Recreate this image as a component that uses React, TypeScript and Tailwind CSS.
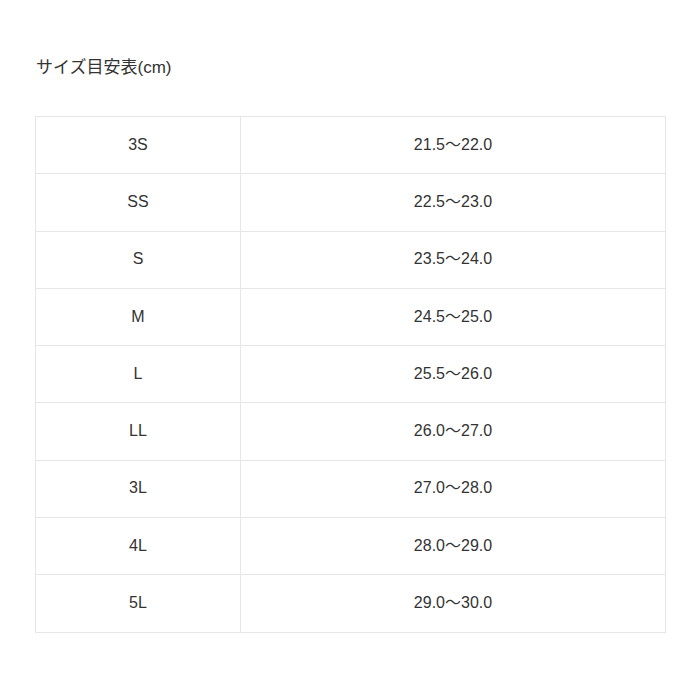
const sizes = [
  ['3S', '21.5〜22.0'],
  ['SS', '22.5〜23.0'],
  ['S', '23.5〜24.0'],
  ['M', '24.5〜25.0'],
  ['L', '25.5〜26.0'],
  ['LL', '26.0〜27.0'],
  ['3L', '27.0〜28.0'],
  ['4L', '28.0〜29.0'],
  ['5L', '29.0〜30.0'],
]

export default function App() {
  return (
    <div
      className="w-[700px] h-[700px] bg-white px-[35px] pt-[56px] text-[#333]"
      style={{ fontFamily: '"Liberation Sans", "Noto Sans CJK JP", sans-serif' }}
    >
      <h2 className="text-[17px] leading-[24px] pl-[1px]">サイズ目安表(cm)</h2>

      <table className="mt-[36px] w-[631px] border-collapse text-[16px]">
        <tbody>
          {sizes.map(([size, range]) => (
            <tr key={size} className="h-[57.3px]">
              <td className="w-[205px] border border-[#e6e6e6] text-center align-middle pb-[1px]">{size}</td>
              <td className="border border-[#e6e6e6] text-center align-middle pb-[1px]">{range}</td>
            </tr>
          ))}
        </tbody>
      </table>
    </div>
  )
}
